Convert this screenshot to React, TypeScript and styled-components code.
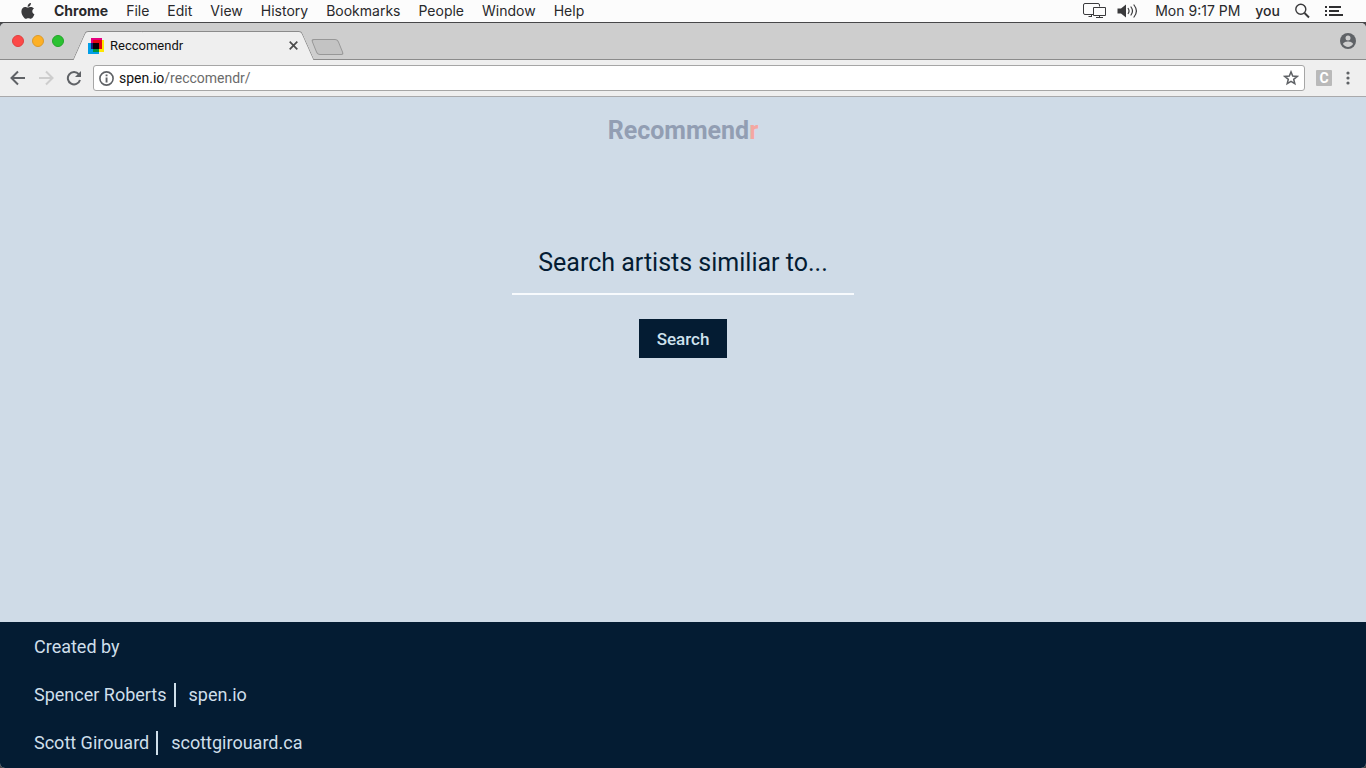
import React from "react";
import styled, { createGlobalStyle } from "styled-components";

const systemFont = `Inter, "Liberation Sans", sans-serif`;
const chromeFont = `Roboto, "Liberation Sans", sans-serif`;
const pageFont = `Roboto, "Liberation Sans", sans-serif`;
const navy = "#041c33";
const paleBlue = "#cfdbe7";

const GlobalStyle = createGlobalStyle`
  *, *::before, *::after { box-sizing: border-box; }
  html, body { margin: 0; }
  body { background: #4a4a4c; font-family: ${pageFont}; }
  button { border: 0; padding: 0; background: none; color: inherit; font: inherit; }
  svg { display: block; flex: none; }
`;

const Desktop = styled.div`
  min-height: 100vh;
  display: flex;
  flex-direction: column;
`;

const MenuBar = styled.header`
  height: 23px;
  flex: none;
  display: flex;
  align-items: center;
  justify-content: space-between;
  padding: 0 23px 0 20px;
  background: #fcfcfc;
  border-bottom: 1px solid #474749;
  color: #29292b;
  font-family: ${systemFont};
  font-size: 14px;
  line-height: 20px;
`;

const MenuGroup = styled.nav`
  display: flex;
  align-items: center;
  gap: 18px;
`;

const MenuItem = styled.button<{ $weight?: number }>`
  font-weight: ${(p) => p.$weight ?? 400};
`;

const StatusGroup = styled.div`
  display: flex;
  align-items: center;
  gap: 15px;
`;

const StatusIcons = styled.div`
  display: flex;
  align-items: center;
  gap: 10px;
  padding-right: 2px;
`;

const BrowserWindow = styled.div`
  flex: 1;
  display: flex;
  flex-direction: column;
  border-radius: 5px;
  overflow: hidden;
  background: ${paleBlue};
`;

const TabStrip = styled.div`
  height: 37px;
  flex: none;
  display: flex;
  align-items: flex-end;
  background: #cecece;
  border-bottom: 1px solid #8b8b8b;
`;

const WindowControls = styled.div`
  align-self: center;
  display: flex;
  gap: 8px;
  padding: 0 15px 0 12px;
`;

const Light = styled.button<{ $fill: string; $edge: string }>`
  width: 12px;
  height: 12px;
  border-radius: 50%;
  background: ${(p) => p.$fill};
  border: 1px solid ${(p) => p.$edge};
`;

const Tab = styled.div`
  position: relative;
  isolation: isolate;
  width: 229px;
  height: 29px;
  margin-bottom: -1px;
  padding: 0 10px 0 9px;
  display: flex;
  align-items: center;
  gap: 6px;
  font-family: ${chromeFont};
  font-size: 13px;
  line-height: 16px;
  color: #111;

  &::before, &::after {
    content: "";
    position: absolute;
    z-index: -1;
    top: 0;
    bottom: 0;
    width: 70%;
    background: #efefef;
    border-top: 1px solid #8b8b8b;
  }
  &::before {
    left: 0;
    border-left: 1px solid #8b8b8b;
    border-top-left-radius: 3px;
    transform: skewX(-24deg);
  }
  &::after {
    right: 0;
    border-right: 1px solid #8b8b8b;
    border-top-right-radius: 3px;
    transform: skewX(24deg);
  }
`;

const TabTitle = styled.span`
  flex: 1;
`;

const NewTab = styled.button`
  width: 27px;
  height: 16px;
  margin: 0 0 4px 6px;
  background: #c3c3c3;
  border: 1px solid #979797;
  border-radius: 3px;
  transform: skewX(22deg);
`;

const ProfileButton = styled.button`
  align-self: center;
  margin: 0 10px 0 auto;
`;

const Toolbar = styled.div`
  height: 37px;
  flex: none;
  display: flex;
  align-items: center;
  padding: 0 16px 0 10px;
  background: #efefef;
  border-bottom: 1px solid #a9a9ab;
`;

const ToolButtons = styled.div`
  display: flex;
  gap: 12px;
  padding-right: 11px;
`;

const AddressBar = styled.div`
  flex: 1;
  height: 26px;
  display: flex;
  align-items: center;
  gap: 5px;
  padding: 0 5px;
  background: #fff;
  border: 1px solid #a6a6a6;
  border-radius: 3px;
  font-family: ${chromeFont};
  font-size: 14px;
  line-height: 20px;
  color: #6b6b6b;
`;

const Address = styled.span`
  flex: 1;
  b { color: #111; font-weight: 400; }
`;

const Extension = styled.button`
  width: 16px;
  height: 16px;
  margin: 0 14px 0 11px;
  background: #b9b9b9;
  border-radius: 1px;
  color: #fff;
  font-family: ${chromeFont};
  font-size: 14px;
  font-weight: 700;
  line-height: 16px;
  text-align: center;
`;

const Page = styled.main`
  flex: 1;
  display: flex;
  flex-direction: column;
  align-items: center;
  padding: 18px 20px;
`;

const Brand = styled.h1`
  margin: 0;
  font-size: 25px;
  line-height: 32px;
  font-weight: 700;
  color: #929eb3;
  span { color: #f4a7a1; }
`;

const SearchForm = styled.form`
  margin-top: 84px;
  width: 100%;
  display: flex;
  flex-direction: column;
  align-items: center;
  gap: 24px;
`;

const SearchInput = styled.input`
  width: 342px;
  max-width: 100%;
  height: 64px;
  padding: 0;
  border: 0;
  border-bottom: 2px solid #f7fafd;
  border-radius: 0;
  outline: 0;
  background: transparent;
  color: ${navy};
  font-family: ${pageFont};
  font-size: 25px;
  text-align: center;
  &::placeholder { color: ${navy}; opacity: 1; }
`;

const SearchButton = styled.button`
  height: 39px;
  padding: 0 18px;
  background: ${navy};
  color: #cfe2ee;
  font-size: 17px;
  font-weight: 500;
  line-height: 24px;
`;

const Footer = styled.footer`
  flex: none;
  padding: 13px 34px;
  display: flex;
  flex-direction: column;
  gap: 24px;
  background: ${navy};
  color: #cfdfea;
  font-size: 18px;
  line-height: 24px;
`;

const Credit = styled.p`
  margin: 0;
  display: flex;
  align-items: center;
`;

const CreditLink = styled.a`
  margin-left: 7px;
  padding-left: 13px;
  border-left: 2px solid #cfdfea;
  color: inherit;
  text-decoration: none;
`;

const AppleLogo = () => (
  <svg width="16" height="18" viewBox="0 0 16 18" fill="#3a3a3c">
    <path d="M10.9 1c.1 1.1-.3 2-.9 2.700-.6.7-1.500 1.200-2.400 1.100-.1-1 .4-2 .9-2.600C9.100 1.500 10.100 1 10.900 1zM14 6.500c-1.100.7-1.700 1.600-1.700 2.800 0 1.400.8 2.500 2.100 3-.4 1.200-1 2.300-1.700 3.200-.5.700-1.100 1.200-1.900 1.200-.9 0-1.300-.5-2.500-.5s-1.600.5-2.400.5c-.8 0-1.400-.6-2-1.300C2.300 13.500 1.400 11.400 1.400 9.400c0-2.900 1.800-4.500 3.700-4.500 1 0 1.900.7 2.700.7.700 0 1.700-.7 3-.7 1.300 0 2.500.6 3.200 1.600z" />
  </svg>
);

const DisplaysIcon = () => (
  <svg width="24" height="16" viewBox="0 0 24 16" fill="none" stroke="#3a3a3c">
    <path d="M10 11.500H2Q.5 11.500.5 10V2Q.5.500 2 .5H15Q16.500.500 16.500 2V3.500M8.500 12v2M5.500 13.500H9" />
    <path d="M10.500 4.500H22.500V12.500H10.500ZM13 14.500H20M16.500 12.500V14.500" />
  </svg>
);

const VolumeIcon = () => (
  <svg width="21" height="16" viewBox="0 0 21 16" fill="none" stroke="#3a3a3c" strokeWidth="1.200" strokeLinecap="round">
    <path d="M.5 5.500H4L9 1.500V14.500L4 10.500H.5Z" fill="#3a3a3c" stroke="none" />
    <path d="M11.200 5.500Q12.900 8 11.200 10.500M14 4Q17 8 14 12M17 2Q21.800 8 17 14" />
  </svg>
);

const SpotlightIcon = () => (
  <svg width="15" height="16" viewBox="0 0 15 16" fill="none" stroke="#3a3a3c">
    <circle cx="5.800" cy="6.300" r="5" strokeWidth="1.400" />
    <path d="M9.500 10L14 14.500" strokeWidth="1.900" />
  </svg>
);

const ListIcon = () => (
  <svg width="18" height="12" viewBox="0 0 18 12" fill="#2f2f31">
    <path d="M0 1h2v2H0zM0 5h2v2H0zM0 9h2v2H0zM4 1h12v2H4zM4 5h10v2H4zM4 9h14v2H4z" />
  </svg>
);

const Favicon = () => (
  <svg width="16" height="16" viewBox="0 0 16 16" shapeRendering="crispEdges">
    <path fill="#e6007e" d="M3 0h11v11H3z" />
    <path fill="#ffe600" d="M5 2h11v12H5z" />
    <path fill="#009fe8" d="M0 5h11v11H0z" />
    <path fill="#e30613" d="M5 2h9v9H5z" />
    <path fill="#1b1b7c" d="M3 5h8v6H3z" />
    <path fill="#00963c" d="M5 11h6v3H5z" />
    <path fill="#080204" d="M5 5h6v6H5z" />
  </svg>
);

const CloseIcon = () => (
  <svg width="9" height="9" viewBox="0 0 9 9" stroke="#4c4c4c" strokeWidth="1.700">
    <path d="M.7.7L8.300 8.300M8.300.7L.7 8.300" />
  </svg>
);

const ProfileIcon = () => (
  <svg width="16" height="16" viewBox="0 0 16 16">
    <circle cx="8" cy="8" r="8" fill="#5f6266" />
    <circle cx="8" cy="4.900" r="2.500" fill="#cecece" />
    <path d="M3 11c0-1.700 3.300-2.600 5-2.600s5 .9 5 2.600C11.900 12.800 10.100 13.900 8 13.900S4.100 12.800 3 11z" fill="#cecece" />
  </svg>
);

const ArrowIcon = ({ forward = false }: { forward?: boolean }) => (
  <svg width="16" height="16" viewBox="0 0 16 16" fill="none" stroke={forward ? "#cdcdcd" : "#5f6266"} strokeWidth="2">
    <path d={forward ? "M1 8H14M8 1.500L14.500 8L8 14.500" : "M15 8H2M8 1.500L1.500 8L8 14.500"} />
  </svg>
);

const ReloadIcon = () => (
  <svg width="16" height="16" viewBox="0 0 16 16">
    <path d="M12.800 4.200A6.200 6.200 0 1 0 14 10" fill="none" stroke="#5f6266" strokeWidth="2" />
    <path d="M15 1v6H9z" fill="#5f6266" />
  </svg>
);

const InfoIcon = () => (
  <svg width="15" height="15" viewBox="0 0 15 15">
    <circle cx="7.500" cy="7.500" r="6.600" fill="none" stroke="#5f6266" strokeWidth="1.600" />
    <path d="M6.600 3.500h1.900v1.800H6.600zM6.600 6.500h1.900v5H6.600z" fill="#5f6266" />
  </svg>
);

const StarIcon = () => (
  <svg width="16" height="16" viewBox="0 0 16 16" fill="none" stroke="#5f6266" strokeWidth="1.500">
    <path d="M8 1.900L9.700 6.100L14.200 6.400L10.700 9.300L11.800 13.700L8 11.300L4.200 13.700L5.300 9.300L1.800 6.400L6.300 6.100Z" />
  </svg>
);

const MoreIcon = () => (
  <svg width="4" height="14" viewBox="0 0 4 14" fill="#5f6266">
    <circle cx="2" cy="2" r="1.600" />
    <circle cx="2" cy="7" r="1.600" />
    <circle cx="2" cy="12" r="1.600" />
  </svg>
);

const menus = ["File", "Edit", "View", "History", "Bookmarks", "People", "Window", "Help"];

const credits = [
  { name: "Spencer Roberts", site: "spen.io" },
  { name: "Scott Girouard", site: "scottgirouard.ca" },
];

export default function App() {
  return (
    <Desktop>
      <GlobalStyle />
      <MenuBar>
        <MenuGroup aria-label="Menu bar">
          <MenuItem aria-label="Apple menu"><AppleLogo /></MenuItem>
          <MenuItem $weight={700}>Chrome</MenuItem>
          {menus.map((m) => <MenuItem key={m}>{m}</MenuItem>)}
        </MenuGroup>
        <StatusGroup>
          <StatusIcons><DisplaysIcon /><VolumeIcon /></StatusIcons>
          <span>Mon 9:17 PM</span>
          <MenuItem $weight={500}>you</MenuItem>
          <MenuItem aria-label="Spotlight"><SpotlightIcon /></MenuItem>
          <MenuItem aria-label="Notification centre"><ListIcon /></MenuItem>
        </StatusGroup>
      </MenuBar>
      <BrowserWindow>
        <TabStrip>
          <WindowControls>
            <Light aria-label="Close window" $fill="#fc4948" $edge="#e0403f" />
            <Light aria-label="Minimise window" $fill="#fdb025" $edge="#dc9a2a" />
            <Light aria-label="Zoom window" $fill="#2ac231" $edge="#24a52a" />
          </WindowControls>
          <Tab>
            <Favicon />
            <TabTitle>Reccomendr</TabTitle>
            <button aria-label="Close tab"><CloseIcon /></button>
          </Tab>
          <NewTab aria-label="New tab" />
          <ProfileButton aria-label="Profile"><ProfileIcon /></ProfileButton>
        </TabStrip>
        <Toolbar>
          <ToolButtons>
            <button aria-label="Back"><ArrowIcon /></button>
            <button aria-label="Forward" disabled><ArrowIcon forward /></button>
            <button aria-label="Reload"><ReloadIcon /></button>
          </ToolButtons>
          <AddressBar>
            <InfoIcon />
            <Address><b>spen.io</b>/reccomendr/</Address>
            <button aria-label="Bookmark this page"><StarIcon /></button>
          </AddressBar>
          <Extension>C</Extension>
          <button aria-label="More"><MoreIcon /></button>
        </Toolbar>
        <Page>
          <Brand>Recommend<span>r</span></Brand>
          <SearchForm onSubmit={(e) => e.preventDefault()}>
            <SearchInput aria-label="Artist" placeholder="Search artists similiar to..." />
            <SearchButton type="submit">Search</SearchButton>
          </SearchForm>
        </Page>
        <Footer>
          <Credit>Created by</Credit>
          {credits.map((c) => (
            <Credit key={c.site}>
              {c.name}
              <CreditLink href={`http://${c.site}`}>{c.site}</CreditLink>
            </Credit>
          ))}
        </Footer>
      </BrowserWindow>
    </Desktop>
  );
}
